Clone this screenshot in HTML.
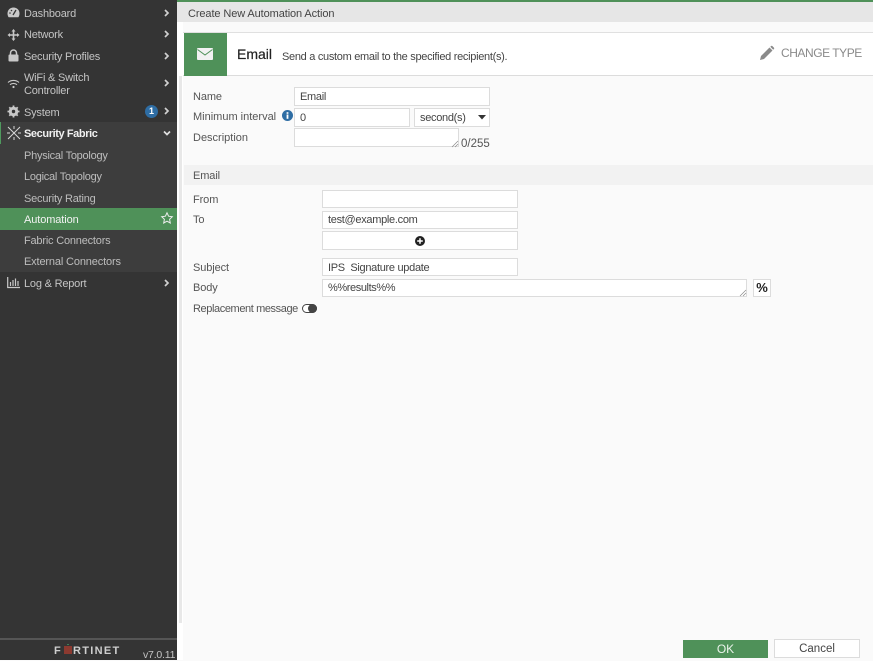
<!DOCTYPE html>
<html><head><meta charset="utf-8">
<style>
html,body{margin:0;padding:0;width:873px;height:660px;overflow:hidden;background:#fafafa;font-family:"Liberation Sans",sans-serif;font-size:11px;color:#4a4a4a}
div,span{position:absolute;white-space:nowrap;box-sizing:border-box}
svg{position:absolute;overflow:visible}
.nav{left:24px;color:#c4c4c4;font-size:11px;line-height:14px;letter-spacing:-.2px;margin-top:1px}
.sub{left:24px;color:#bdbdbd;font-size:11px;line-height:14px;letter-spacing:-.2px;margin-top:1px}
.lbl{left:193px;color:#555;font-size:11px;line-height:14px;letter-spacing:-.1px;margin-top:1px}
.in{background:#fff;border:1px solid #dcdcdc;color:#444;padding-left:5px;font-size:11px;line-height:19px;letter-spacing:-.3px}
.chev{left:163px;width:8px;height:8px}
</style></head><body>
<div style="left:0;top:0;width:177px;height:660px;background:#343434"></div>
<div style="left:0;top:122px;width:177px;height:150px;background:#3d3d3d"></div>
<div style="left:0;top:122px;width:1px;height:22px;background:#4f9a5e"></div>
<div style="left:0;top:208px;width:177px;height:22px;background:#4f9159"></div>

<svg style="left:7px;top:7px" width="13" height="11" viewBox="0 0 13 11"><path d="M6.500.5C3 .5.5 3 .5 6.500c0 1.500.5 3 1.200 3.800h9.600c.7-.8 1.200-2.300 1.200-3.800C12.500 3 10 .5 6.500.5z" fill="#c8c8c8"/><path d="M6 8L9 3" stroke="#343434" stroke-width="1.300"/><circle cx="3" cy="6" r=".8" fill="#343434"/><circle cx="4.500" cy="3.500" r=".8" fill="#343434"/></svg>
<div class="nav" style="top:6px">Dashboard</div>
<svg style="left:7px;top:29px" width="13" height="12" viewBox="0 0 13 12"><path d="M6.500 0L8.500 2.500H7.300V5.200H10V4L12.500 6 10 8V6.800H7.300V9.500H8.500L6.500 12 4.500 9.500H5.700V6.800H3V8L.5 6 3 4V5.200H5.700V2.500H4.500z" fill="#c8c8c8"/></svg>
<div class="nav" style="top:27px">Network</div>
<svg style="left:8px;top:49px" width="11" height="13" viewBox="0 0 11 13"><path d="M2.500 6V4a3 3 0 016 0v2" fill="none" stroke="#c8c8c8" stroke-width="1.500"/><rect x="0.500" y="5.500" width="10" height="7" rx="1" fill="#c8c8c8"/></svg>
<div class="nav" style="top:49px">Security Profiles</div>
<svg style="left:7px;top:79px" width="13" height="10" viewBox="0 0 13 10"><path d="M1 3.500C4 .8 9 .8 12 3.500M3 5.700c2-1.700 5-1.700 7 0" fill="none" stroke="#c8c8c8" stroke-width="1.100"/><circle cx="6.500" cy="8" r="1.100" fill="#c8c8c8"/></svg>
<div class="nav" style="top:71px;line-height:13px">WiFi &amp; Switch<br>Controller</div>
<svg style="left:7px;top:105px" width="13" height="13" viewBox="0 0 13 13"><circle cx="6.500" cy="6.500" r="3.500" fill="none" stroke="#c8c8c8" stroke-width="2.500"/><path d="M6.500.5v12M.5 6.500h12M2.300 2.300l8.400 8.400M10.700 2.300l-8.400 8.400" stroke="#c8c8c8" stroke-width="1.800"/><circle cx="6.500" cy="6.500" r="1.700" fill="#343434"/></svg>
<div class="nav" style="top:105px">System</div>
<div style="left:145px;top:105px;width:13px;height:13px;border-radius:50%;background:#2e6da4;color:#fff;font-size:9px;line-height:13px;text-align:center;font-weight:bold">1</div>
<svg style="left:7px;top:126px" width="14" height="14" viewBox="0 0 14 14"><path d="M1 1l4 4M13 1L9 5M1 13l4-4M13 13L9 9M5 5l4 4M9 5L5 9M7 0v3M7 11v3M0 7h3M11 7h3" stroke="#d8d8d8" stroke-width="1" fill="none"/></svg>
<div class="nav" style="top:126px;color:#f0f0f0;font-weight:bold;font-size:11px;letter-spacing:-.4px">Security Fabric</div>
<div class="sub" style="top:148px;letter-spacing:-.25px">Physical Topology</div>
<div class="sub" style="top:169px;letter-spacing:-.25px">Logical Topology</div>
<div class="sub" style="top:191px">Security Rating</div>
<div class="sub" style="top:212px;color:#f2f2f2;letter-spacing:-.1px">Automation</div>
<svg style="left:161px;top:212px" width="12" height="12" viewBox="0 0 12 12"><path d="M6 .8l1.600 3.400 3.700.5-2.700 2.600.7 3.700L6 9.200 2.700 11l.7-3.700L.7 4.700l3.700-.5z" fill="none" stroke="#eee" stroke-width="1"/></svg>
<div class="sub" style="top:233px">Fabric Connectors</div>
<div class="sub" style="top:254px;letter-spacing:-.15px">External Connectors</div>
<svg style="left:7px;top:277px" width="13" height="12" viewBox="0 0 13 12"><path d="M.7 0v10.500H13" fill="none" stroke="#c8c8c8" stroke-width="1.200"/><path d="M3.500 5v4M6 3v6M8.500 1.500V9M11 4v5" stroke="#c8c8c8" stroke-width="1.200"/></svg>
<div class="nav" style="top:276px">Log &amp; Report</div>

<svg class="chev" style="top:9px" viewBox="0 0 8 8"><path d="M2 1l3 3-3 3" fill="none" stroke="#d0d0d0" stroke-width="1.700"/></svg>
<svg class="chev" style="top:30px" viewBox="0 0 8 8"><path d="M2 1l3 3-3 3" fill="none" stroke="#d0d0d0" stroke-width="1.700"/></svg>
<svg class="chev" style="top:52px" viewBox="0 0 8 8"><path d="M2 1l3 3-3 3" fill="none" stroke="#d0d0d0" stroke-width="1.700"/></svg>
<svg class="chev" style="top:79px" viewBox="0 0 8 8"><path d="M2 1l3 3-3 3" fill="none" stroke="#d0d0d0" stroke-width="1.700"/></svg>
<svg class="chev" style="top:107px" viewBox="0 0 8 8"><path d="M2 1l3 3-3 3" fill="none" stroke="#d0d0d0" stroke-width="1.700"/></svg>
<svg class="chev" style="top:129px" viewBox="0 0 8 8"><path d="M1 2.500l3 3 3-3" fill="none" stroke="#e0e0e0" stroke-width="1.700"/></svg>
<svg class="chev" style="top:279px" viewBox="0 0 8 8"><path d="M2 1l3 3-3 3" fill="none" stroke="#d0d0d0" stroke-width="1.700"/></svg>

<div style="left:0;top:638px;width:177px;height:2px;background:#555"></div>
<div style="left:54px;top:645px;color:#cfcfcf;font-size:11px;font-weight:bold;line-height:12px">F</div>
<div style="left:64px;top:646px;width:8px;height:8px;background:#8c3a30"></div>
<div style="left:67px;top:644px;width:2px;height:1px;background:#3f7f55"></div>
<div style="left:73px;top:645px;color:#cfcfcf;font-size:11px;font-weight:bold;letter-spacing:1.300px;line-height:12px">RTINET</div>
<div style="left:143px;top:649px;color:#c4c4c4;font-size:10.500px;line-height:12px;letter-spacing:-.2px">v7.0.11</div>

<div style="left:177px;top:0;width:696px;height:660px;background:#fafafa"></div>
<div style="left:177px;top:0;width:6px;height:660px;background:#fff"></div>
<div style="left:177px;top:0;width:696px;height:2px;background:#4f9159"></div>
<div style="left:177px;top:2px;width:696px;height:20px;background:#e6e6e6"></div>
<div style="left:188px;top:7px;font-size:11px;line-height:14px;color:#444;letter-spacing:-.1px">Create New Automation Action</div>
<div style="left:179px;top:76px;width:3px;height:547px;background:#e8e8e8"></div>

<div style="left:183px;top:32px;width:690px;height:44px;background:#fff;border-top:1px solid #e0e0e0;border-bottom:1px solid #dcdcdc"></div>
<div style="left:184px;top:33px;width:43px;height:43px;background:#4f9159"></div>
<svg style="left:197px;top:48px" width="16" height="12" viewBox="0 0 16 12"><rect width="16" height="12" rx="1" fill="#f2f2f2"/><path d="M.5 1.500L8 7l7.500-5.500" fill="none" stroke="#4f9159" stroke-width="1"/></svg>
<div style="left:237px;top:46px;font-size:14px;line-height:16px;color:#222;-webkit-text-stroke:.2px #222">Email</div>
<div style="left:282px;top:50px;font-size:11px;line-height:14px;color:#444;letter-spacing:-.3px">Send a custom email to the specified recipient(s).</div>
<svg style="left:760px;top:46px" width="14" height="14" viewBox="0 0 14 14"><path d="M0 14l1-4L9.500 1.500l3 3L4 13z M10.300.8l.7-.7a1 1 0 011.400 0l1.500 1.500a1 1 0 010 1.400l-.7.700z" fill="#8a8a8a"/></svg>
<div style="left:781px;top:46px;font-size:12px;line-height:15px;color:#8a8a8a;letter-spacing:-.45px">CHANGE TYPE</div>

<div class="lbl" style="top:89px">Name</div>
<div class="in" style="left:294px;top:87px;width:196px;height:19px;line-height:18px">Email</div>
<div class="lbl" style="top:109px;letter-spacing:0">Minimum interval</div>
<svg style="left:282px;top:110px" width="11" height="11" viewBox="0 0 11 11"><circle cx="5.500" cy="5.500" r="5.500" fill="#2e6da4"/><rect x="4.600" y="4.500" width="1.800" height="4.300" fill="#fff"/><rect x="4.600" y="2.200" width="1.800" height="1.600" fill="#fff"/></svg>
<div class="in" style="left:294px;top:108px;width:116px;height:19px;line-height:18px">0</div>
<div class="in" style="left:414px;top:108px;width:76px;height:19px;line-height:18px;letter-spacing:-.3px">second(s)</div>
<svg style="left:478px;top:115px" width="8" height="5" viewBox="0 0 8 5"><path d="M0 0h8L4 4.500z" fill="#333"/></svg>
<div class="lbl" style="top:130px;letter-spacing:0">Description</div>
<div class="in" style="left:294px;top:128px;width:165px;height:19px"></div>
<svg style="left:452px;top:141px" width="6" height="6" viewBox="0 0 6 6"><path d="M0 6L6 0M3 6L6 3" stroke="#888" stroke-width=".7"/></svg>
<div style="left:461px;top:137px;font-size:11.500px;line-height:14px;color:#555">0/255</div>

<div style="left:184px;top:165px;width:689px;height:20px;background:#f2f2f2"></div>
<div class="lbl" style="top:168px">Email</div>
<div class="lbl" style="top:192px">From</div>
<div class="in" style="left:322px;top:190px;width:196px;height:18px"></div>
<div class="lbl" style="top:212px">To</div>
<div class="in" style="left:322px;top:211px;width:196px;height:18px;line-height:17px;letter-spacing:-.3px">test@example.com</div>
<div class="in" style="left:322px;top:231px;width:196px;height:19px"></div>
<svg style="left:415px;top:236px" width="10" height="10" viewBox="0 0 10 10"><circle cx="5" cy="5" r="5" fill="#222"/><path d="M5 2.200v5.600M2.200 5h5.600" stroke="#fff" stroke-width="1.500"/></svg>
<div class="lbl" style="top:260px">Subject</div>
<div class="in" style="left:322px;top:258px;width:196px;height:18px;line-height:18px;letter-spacing:-.3px">IPS&nbsp; Signature update</div>
<div class="lbl" style="top:280px">Body</div>
<div class="in" style="left:322px;top:279px;width:425px;height:18px;line-height:17px;letter-spacing:-.4px">%%results%%</div>
<svg style="left:740px;top:290px" width="6" height="6" viewBox="0 0 6 6"><path d="M0 6L6 0M3 6L6 3" stroke="#888" stroke-width=".7"/></svg>
<div class="in" style="left:753px;top:279px;width:18px;height:18px;padding:0;text-align:center;font-weight:bold;font-size:13px;line-height:16px;color:#222;letter-spacing:0">%</div>
<div class="lbl" style="top:301px;letter-spacing:-.4px">Replacement message</div>
<div style="left:302px;top:304px;width:15px;height:9px;border-radius:5px;border:1px solid #444;background:#fff"></div>
<div style="left:308px;top:304px;width:9px;height:9px;border-radius:50%;background:#444"></div>

<div style="left:683px;top:640px;width:85px;height:18px;background:#4f9159;color:#eaf3ea;text-align:center;font-size:12px;line-height:18px">OK</div>
<div style="left:774px;top:639px;width:86px;height:19px;background:#fff;border:1px solid #dcdcdc;color:#444;text-align:center;font-size:11.500px;line-height:19px">Cancel</div>
</body></html>
